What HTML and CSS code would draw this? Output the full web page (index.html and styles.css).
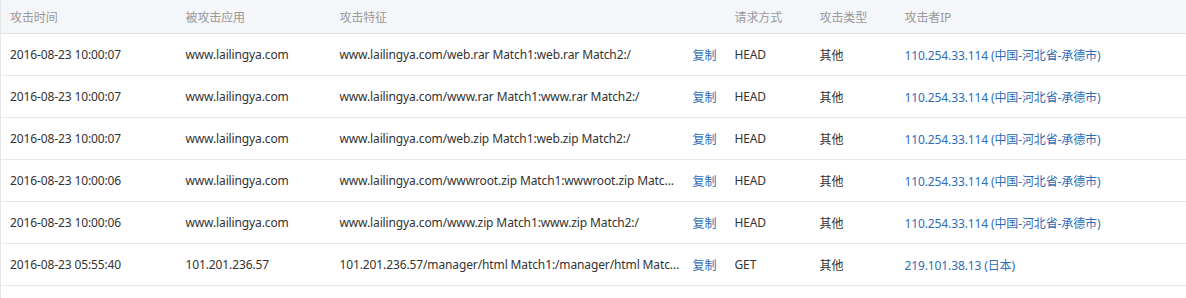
FILE: index.html
```html
<!DOCTYPE html>
<html lang="zh-CN">
<head>
<meta charset="utf-8">
<title>攻击记录</title>
<link rel="stylesheet" href="styles.css">
</head>
<body>
<table class="log">
  <colgroup>
    <col class="c-time"><col class="c-app"><col class="c-feat"><col class="c-copy"><col class="c-method"><col class="c-type"><col class="c-ip">
  </colgroup>
  <thead>
    <tr><th>攻击时间</th><th>被攻击应用</th><th colspan="2">攻击特征</th><th>请求方式</th><th>攻击类型</th><th>攻击者IP</th></tr>
  </thead>
  <tbody>
    <tr><td>2016-08-23 10:00:07</td><td>www.lailingya.com</td><td class="feat">www.lailingya.com/web.rar Match1:web.rar Match2:/</td><td><a class="link">复制</a></td><td>HEAD</td><td>其他</td><td><a class="link">110.254.33.114 (中国-河北省-承德市)</a></td></tr>
    <tr><td>2016-08-23 10:00:07</td><td>www.lailingya.com</td><td class="feat">www.lailingya.com/www.rar Match1:www.rar Match2:/</td><td><a class="link">复制</a></td><td>HEAD</td><td>其他</td><td><a class="link">110.254.33.114 (中国-河北省-承德市)</a></td></tr>
    <tr><td>2016-08-23 10:00:07</td><td>www.lailingya.com</td><td class="feat">www.lailingya.com/web.zip Match1:web.zip Match2:/</td><td><a class="link">复制</a></td><td>HEAD</td><td>其他</td><td><a class="link">110.254.33.114 (中国-河北省-承德市)</a></td></tr>
    <tr><td>2016-08-23 10:00:06</td><td>www.lailingya.com</td><td class="feat">www.lailingya.com/wwwroot.zip Match1:wwwroot.zip Match2:/</td><td><a class="link">复制</a></td><td>HEAD</td><td>其他</td><td><a class="link">110.254.33.114 (中国-河北省-承德市)</a></td></tr>
    <tr><td>2016-08-23 10:00:06</td><td>www.lailingya.com</td><td class="feat">www.lailingya.com/www.zip Match1:www.zip Match2:/</td><td><a class="link">复制</a></td><td>HEAD</td><td>其他</td><td><a class="link">110.254.33.114 (中国-河北省-承德市)</a></td></tr>
    <tr><td>2016-08-23 05:55:40</td><td>101.201.236.57</td><td class="feat">101.201.236.57/manager/html Match1:/manager/html Match2:/</td><td><a class="link">复制</a></td><td>GET</td><td>其他</td><td><a class="link">219.101.38.13 (日本)</a></td></tr>
    <tr class="empty"><td></td><td></td><td></td><td></td><td></td><td></td><td></td></tr>
  </tbody>
</table>
</body>
</html>
```

FILE: styles.css
```css
html, body {
  margin: 0;
  padding: 0;
  background: #fff;
}
body {
  font-family: "Noto Sans", "Noto Sans CJK SC", sans-serif;
  font-size: 12px;
  color: #333;
  letter-spacing: -0.12px;
}
.log {
  width: 1186px;
  border-collapse: collapse;
  table-layout: fixed;
  border-left: 1px solid #e6e6e6;
}
.c-time { width: 176px; }
.c-app { width: 154px; }
.c-feat { width: 353px; }
.c-copy { width: 42px; }
.c-method { width: 85px; }
.c-type { width: 85px; }
.c-ip { width: auto; }
.log th {
  height: 33px;
  padding: 0 0 0 9px;
  text-align: left;
  font-weight: normal;
  color: #999;
  background: #f5f6fa;
  border-bottom: 1px solid #e2e2e2;
  white-space: nowrap;
}
.log td {
  height: 41px;
  padding: 0 0 0 9px;
  border-bottom: 1px solid #e8e8e8;
  white-space: nowrap;
  overflow: hidden;
  text-overflow: ellipsis;
}
.log td.feat {
  padding-right: 3px;
}
.link {
  color: #2f6db5;
  cursor: pointer;
}
.empty td {
  height: 12px;
  border-bottom: none;
}
```
